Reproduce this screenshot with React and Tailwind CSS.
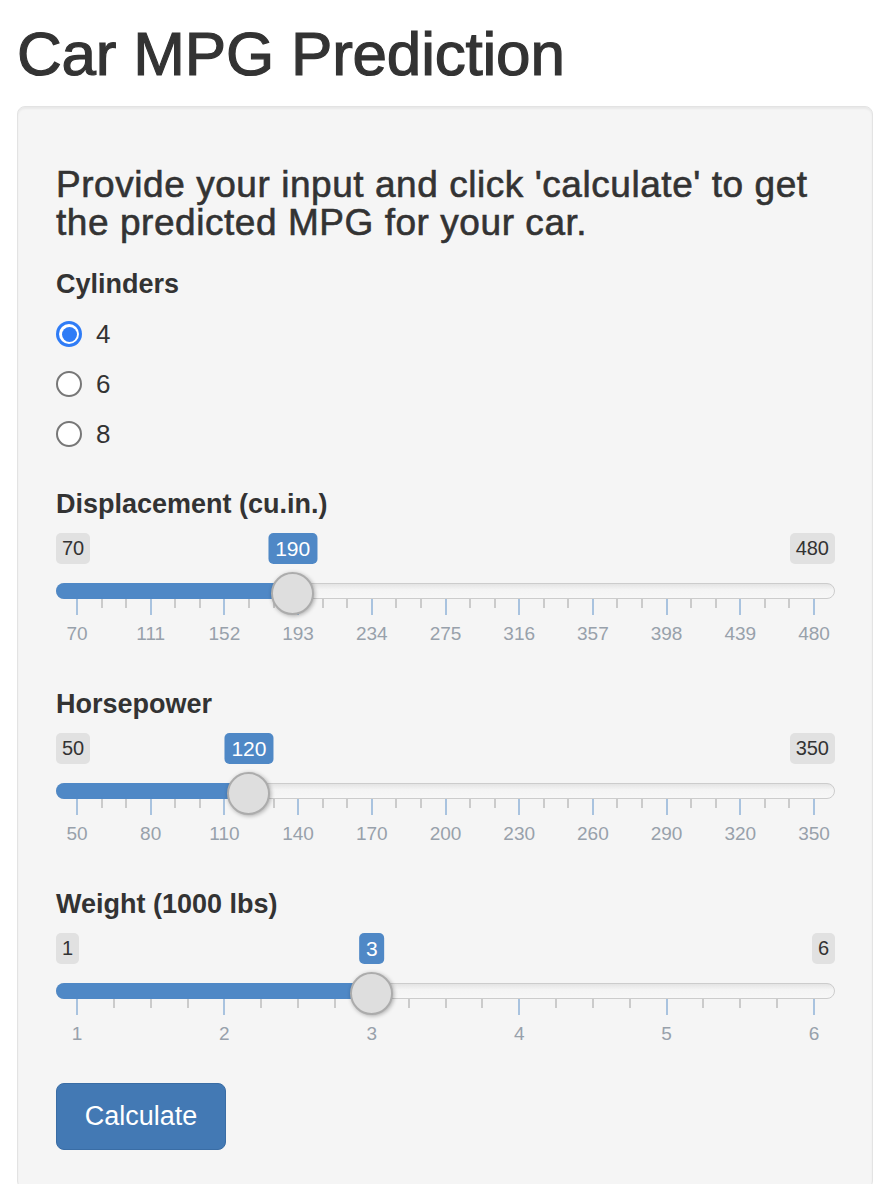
import React from "react";

function Slider({ min, max, value, labels, minors, last }) {
  const W = 779;
  const pad = 21;
  const pos = (v) => pad + ((v - min) / (max - min)) * (W - 2 * pad);
  const thumbX = pos(value);
  const ticks = [];
  for (let i = 0; i < labels.length; i++) {
    ticks.push({ x: pos(labels[i]), major: true, key: "M" + i });
    if (i < labels.length - 1) {
      const a = pos(labels[i]);
      const b = pos(labels[i + 1]);
      for (let j = 1; j <= minors; j++) {
        ticks.push({ x: a + ((b - a) * j) / (minors + 1), major: false, key: "m" + i + "_" + j });
      }
    }
  }
  return (
    <div className={"relative w-full flex flex-col pt-[9px] " + (last ? "h-[159px]" : "h-[160px]")}>
      {/* min / max badges */}
      <div className="relative flex justify-between h-[31px]">
        <span className="h-[31px] px-[6px] rounded-[5px] bg-[#e1e1e1] text-[#333] text-[20px] leading-[31px]">
          {min}
        </span>
        <span className="h-[31px] px-[6px] rounded-[5px] bg-[#e1e1e1] text-[#333] text-[20px] leading-[31px]">
          {max}
        </span>
        <span
          className="absolute top-0 h-[31px] px-[7px] -translate-x-1/2 rounded-[5px] bg-[#4f88c6] text-white text-[21px] leading-[31px]"
          style={{ left: thumbX }}
        >
          {value}
        </span>
      </div>
      {/* track */}
      <div className="relative mt-[19px] h-[16px] rounded-full border border-[#cccccc] bg-[linear-gradient(to_bottom,#e4e4e4,#f4f4f4_40%,#f7f7f7)]">
        <div
          className="absolute -left-px -top-px h-[16px] rounded-l-full bg-[#4f88c6]"
          style={{ width: thumbX + 1 }}
        />
      </div>
      {/* ticks */}
      <div className="relative h-[24px]">
        {ticks.map((t) => (
          <span
            key={t.key}
            className={
              "absolute top-0 w-[2px] " +
              (t.major ? "h-[16px] bg-[#a9c3df]" : "h-[9px] bg-[#cbcbcb]")
            }
            style={{ left: t.x - 1 }}
          />
        ))}
      </div>
      {/* tick labels */}
      <div className="relative h-[22px]">
        {labels.map((l, i) => (
          <span
            key={"l" + i}
            className="absolute top-0 w-[60px] -ml-[30px] text-center text-[19px] leading-[22px] text-[#98a1ab]"
            style={{ left: pos(l) }}
          >
            {l}
          </span>
        ))}
      </div>
      {/* thumb */}
      <span
        className="absolute top-[48px] w-[43px] h-[43px] -ml-[21.5px] rounded-full bg-[#dedede] border-2 border-[#acacac] shadow-[1px_1px_4px_rgba(0,0,0,0.3)]"
        style={{ left: thumbX }}
      />
    </div>
  );
}

function Radio({ checked, label }) {
  return (
    <div className="flex items-center h-[50px]">
      {checked ? (
        <span className="w-[26px] h-[26px] rounded-full bg-[#2f7cf6] flex items-center justify-center">
          <span className="w-[20px] h-[20px] rounded-full bg-white flex items-center justify-center">
            <span className="w-[15px] h-[15px] rounded-full bg-[#2f7cf6]" />
          </span>
        </span>
      ) : (
        <span className="w-[26px] h-[26px] rounded-full bg-white border-2 border-[#777]" />
      )}
      <span className="ml-[14px] text-[26px] text-[#333]">{label}</span>
    </div>
  );
}

function Label({ children }) {
  return (
    <div className="h-[40px] flex items-center text-[27px] font-bold text-[#333]">{children}</div>
  );
}

export default function App() {
  return (
    <div
      className="w-[874px] h-[1184px] overflow-hidden bg-white text-[#333]"
      style={{ fontFamily: '"Liberation Sans", Arial, sans-serif' }}
    >
      <h2 className="ml-[17px] mt-[20px] text-[62px] leading-[67px] font-normal text-[#333] tracking-[-0.2px] [-webkit-text-stroke:1.2px_#333]">
        Car MPG Prediction
      </h2>
      <div className="ml-[17px] mr-[1px] mt-[19px] rounded-[8px] border border-[#e3e3e3] bg-[#f5f5f5] pt-[38px] pl-[38px] pr-[37px] pb-[38px] shadow-[inset_0_2px_2px_rgba(0,0,0,0.05)]">
        <h4 className="mt-[21px] text-[37px] leading-[38px] tracking-[0.55px] font-normal text-[#333] [-webkit-text-stroke:0.6px_#333]">
          Provide your input and click 'calculate' to get the predicted MPG for your car.
        </h4>
        <div className="mt-[22px]">
          <Label>Cylinders</Label>
        </div>
        <div className="mt-[5px] flex flex-col">
          <Radio checked label="4" />
          <Radio label="6" />
          <Radio label="8" />
        </div>
        <div className="mt-[25px] flex flex-col">
          <Label>Displacement (cu.in.)</Label>
          <Slider
            min={70}
            max={480}
            value={190}
            labels={[70, 111, 152, 193, 234, 275, 316, 357, 398, 439, 480]}
            minors={2}
          />
          <Label>Horsepower</Label>
          <Slider
            min={50}
            max={350}
            value={120}
            labels={[50, 80, 110, 140, 170, 200, 230, 260, 290, 320, 350]}
            minors={2}
          />
          <Label>Weight (1000 lbs)</Label>
          <Slider min={1} max={6} value={3} labels={[1, 2, 3, 4, 5, 6]} minors={3} last />
        </div>
        <button className="w-[170px] h-[67px] rounded-[8px] bg-[#4379b4] border border-[#3a6da5] text-white text-[27px]">
          Calculate
        </button>
      </div>
    </div>
  );
}
